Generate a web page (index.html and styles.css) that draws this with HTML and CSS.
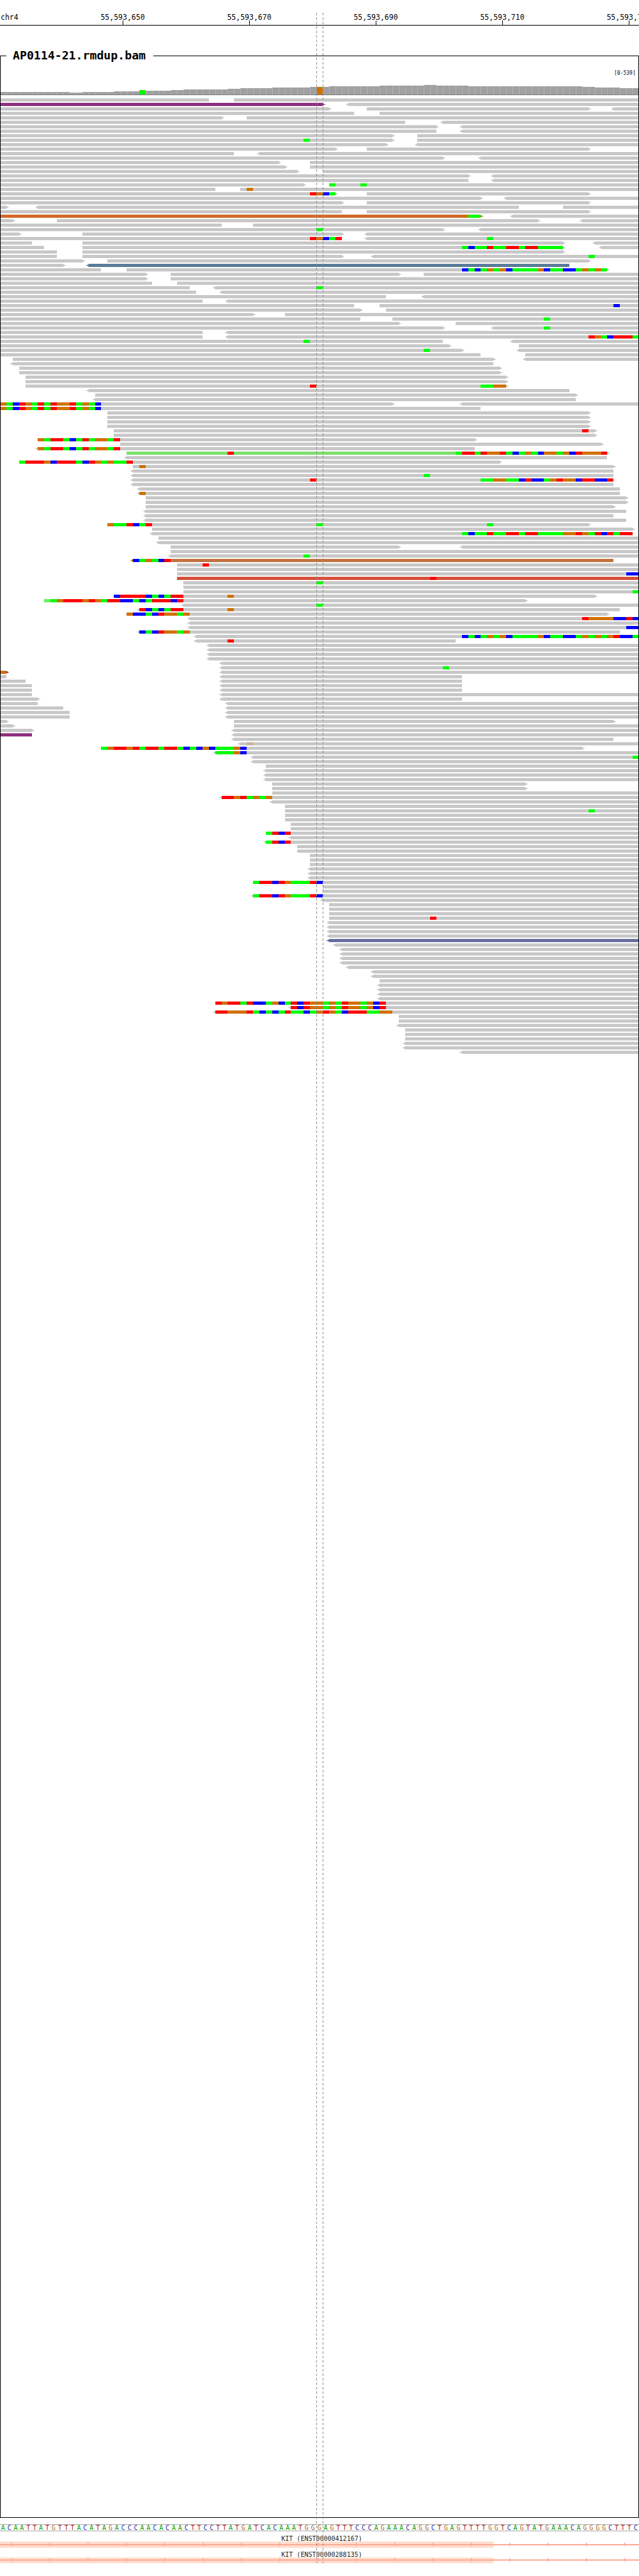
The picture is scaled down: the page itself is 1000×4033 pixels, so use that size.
FILE: index.html
```html
<!DOCTYPE html>
<html>
    <head>
        <meta charset="utf-8">
        <title>AP0114-21.rmdup.bam</title>
        <link rel="stylesheet" href="styles.css">
    </head>
    <body>
        <div class="page">
            <svg id="ruler" class="ruler" width="1000" height="40"></svg>

            <div class="track">
                <div class="track-title">AP0114-21.rmdup.bam</div>
                <svg id="coverage" class="coverage" width="998" height="62"></svg>
                <svg id="reads" class="reads" width="998" height="3790"></svg>
            </div>

            <svg id="sequence" class="sequence" width="1000" height="9"></svg>

            <div class="gene">
                <div class="gene-label">KIT (ENST00000412167)</div>
                <svg id="gene-one" class="gene-bar" width="1000" height="10"></svg>
            </div>
            <div class="gene">
                <div class="gene-label">KIT (ENST00000288135)</div>
                <svg id="gene-two" class="gene-bar" width="1000" height="9"></svg>
            </div>

            <div class="center-line left"></div>
            <div class="center-line right"></div>
        </div>
        <script src="script.js"></script>
    </body>
</html>
```

FILE: styles.css
```css
html, body {
    margin: 0;
    padding: 0;
    background-color: white;
}
svg {
    display: block;
}
.page {
    position: relative;
    width: 1000px;
    height: 4033px;
    overflow: hidden;
}
.ruler text {
    font-family: "DejaVu Sans Mono", monospace;
    font-size: 11.5px;
    fill: black;
}
.ruler line {
    stroke: black;
    stroke-width: 1;
}
.track {
    position: relative;
    box-sizing: border-box;
    width: 1000px;
    height: 3855px;
    margin-top: 47px;
    border: 1px solid black;
}
.track-title {
    position: absolute;
    top: -12px;
    left: 9px;
    padding: 0 12px 0 10px;
    background-color: white;
    font-family: "DejaVu Sans Mono", monospace;
    font-size: 18.2px;
    font-weight: bold;
    line-height: 22px;
    color: black;
}
.coverage text {
    font-family: "DejaVu Sans Mono", monospace;
    font-size: 8px;
    fill: black;
}
.sequence {
    box-sizing: content-box;
    margin-top: 10px;
    border-top: 1px solid #aaaaaa;
    border-bottom: 1px solid #aaaaaa;
}
.sequence text {
    font-family: "DejaVu Sans Mono", monospace;
    font-size: 10px;
    text-anchor: middle;
}
.base-A { fill: #00a000; }
.base-C { fill: #2030a0; }
.base-G { fill: #b06a20; }
.base-T { fill: #b02020; }
.gene {
    margin-top: 6px;
    height: 20px;
}
.gene + .gene {
    margin-top: 5px;
}
.gene-label {
    height: 10px;
    padding-left: 7px;
    font-family: "DejaVu Sans Mono", monospace;
    font-size: 10px;
    line-height: 11px;
    text-align: center;
    color: #222222;
}
.center-line {
    position: absolute;
    top: 20px;
    width: 1px;
    height: 3993px;
    background: repeating-linear-gradient(to bottom, #909090 0, #909090 4px, transparent 4px, transparent 7px);
}
.center-line.left {
    left: 495px;
}
.center-line.right {
    left: 505px;
}
```

FILE: script.js
```js
const NS = 'http://www.w3.org/2000/svg';
const BASE = 9.9;   // pixels per base
const ROW = 7;      // read row pitch
const READ_H = 5;

const colors = {
    r: '#ff0000', g: '#00ff00', b: '#0000ff', o: '#d17105', l: '#66ee66', t: '#c8b49a',
    x: '#c8c8c8', p: '#8f2f7f', c: '#d2692a', s: '#5a7d99', v: '#7ddf6e', k: '#c1733f',
    e: '#d6503a', i: '#666e9f'
};

// one line per row: [<]start-end[>][:color] and @start + mismatch letters
const rows = [
    '0-33 37-101',
    '0-51>:p <55-101',
    '0-52> 58-93> <97-101',
    '0-56 60-101',
    '0-35> 39-101',
    '0-64 <70-101',
    '0-69> <73-101',
    '0-69 <73-101',
    '0-62> 66-101',
    '0-62> 66-101 @48g',
    '0-61> <66-101',
    '0-53> 58-93>',
    '0-37 <41-101',
    '0-70> <76-101',
    '0-44> 49-101',
    '0-45> 49-101',
    '0-47> 51-101',
    '0-74> <78-101',
    '0-74 <78-101',
    '0-48> 52-101 @52g @57g',
    '0-34 38-101 @39o',
    '0-53> 58-93> @49robg',
    '0-76> <80-101',
    '0-54> 58-93>',
    '0-1> <6-82 89-101',
    '0-54 58-93>',
    '0-76>:c <81-101 @73ogg',
    '0-2> 9-85> <92-101',
    '0-35 40-101',
    '0-70> <76-101 @50g',
    '0-3> 13-54> <58-101',
    '0-54 <58-101 @49robgr @77g',
    '0-5 13-89> <94-101',
    '0-7 13-89> <95-101 @73gbggrggrrgrrgggg',
    '0-9 13-89>',
    '0-9 13-54> <59-101 @93g',
    '0-13> 17-93>',
    '0-10> <14-90:s',
    '0-16 20-96> @73bgbgogobggggobggbbgogog',
    '0-23> 27-63> 67-101',
    '0-23> 27-101',
    '0-24 28-101',
    '0-30 <34-101 @50g',
    '0-31 <35-101',
    '0-61 <67-101',
    '0-32 <36-101',
    '0-56 60-101 @97b',
    '0-57> 61-101',
    '0-40> 45-101',
    '0-57 62-101 @86g',
    '0-63> 72-101',
    '0-70> <78-101 @86g',
    '0-32 <36-101',
    '0-32 <36-101 @93rogbrrrg',
    '0-70 <81-101 @48g',
    '0-71> 82-101',
    '0-73> <82-101 @67g',
    '0-76 83-101',
    '2-78> <83-101',
    '<2-78',
    '3-79>',
    '3-79>',
    '4-80>',
    '4-80>',
    '4-80> @49r @76ggoo',
    '<14-90',
    '15-91>',
    '<15-91',
    '0-62> <73-101 @0ogbrogrgroorgogb',
    '0-76 @0ogbrogrgroorgogb',
    '17-93>',
    '17-93>',
    '17-93>',
    '17-93>',
    '18-94> @92r',
    '18-94>',
    '6-75> @6ogrrgbgrgoogr',
    '19-95>',
    '<6-75 @6ogrrgbgrgoogr',
    '20-96>:v @36r @72grrgroorgbgogboogobrooor',
    '<20-96',
    '3-79> @3grrrobrrrgbrogoggr',
    '21-97> @22o',
    '<21-97',
    '<21-97 @67g',
    '<21-97 @49r @76ggooggbrbbgoroobrrbbr',
    '<21-97',
    '<22-98',
    '<22-98 @22o',
    '23-99>',
    '23-99>',
    '23-97>',
    '<23-99',
    '<23-97',
    '<23-99',
    '17-93> @17oggrbgr @50g @77g',
    '24-100>',
    '<24-100 @73gbggrggrrgrrggggoorogrbrgrr',
    '25-101',
    '<25-101',
    '27-63> <73-101',
    '27-101',
    '<27-101 @48g',
    '<21-97:k @21bgogbr',
    '28-101 @32r',
    '28-101',
    '28-101 @99bb',
    '28-101:e @68r',
    '29-101 @50g',
    '29-101',
    '29-101 @100g',
    '18-94> @18brrrrbgbgrr @36o',
    '7-83> @7lgorrrorogrrbbgbgrrrbr',
    '<29-101 @50g',
    '<22-98 @22rbgbgrr @36o',
    '20-96> @20obbgbroogo',
    '<30-101 @92roooobbrb',
    '<30-101',
    '<30-101 @99bb',
    '<22-98 @22bgbroogo',
    '<31-101 @73bgbgogobggggobggbbgogogorbbg',
    '<31-72 @36r',
    '<33-101',
    '<33-101',
    '<33-101',
    '<33-101',
    '<35-101',
    '<35-101 @70g',
    '0-1>:p <35-101 @0o',
    '0-1 <35-73',
    '0-4 <35-73',
    '0-5 <35-73',
    '0-5 <35-73',
    '0-5 <35-101',
    '0-6> <35-73',
    '0-6 <36-101',
    '0-10 <36-101',
    '0-11 <36-101',
    '0-11 <36-101',
    '0-1> 37-97>',
    '0-2> 37-101',
    '0-5> <37-101',
    '0-5:p <37-101',
    '<37-97',
    '<38-101 @39t',
    '16-92> @16gorrorgrrgrrgbgbobgggob',
    '<34-101 @34gggob',
    '<40-101 @100g',
    '<40-101',
    '42-101',
    '<42-101',
    '<42-101',
    '<42-101',
    '43-83>',
    '43-83>',
    '43-101',
    '<35-101 @35rrorgogo',
    '<43-101',
    '45-101',
    '45-101 @93g',
    '45-101',
    '45-101',
    '46-101',
    '46-101',
    '42-101 @42grbr',
    '<46-101',
    '<42-101 @42grbr',
    '47-101',
    '47-101',
    '49-101',
    '49-101',
    '49-101',
    '<49-101',
    '<49-101',
    '<49-101',
    '40-101 @40grrbrogggrb',
    '51-101',
    '51-101',
    '<40-101 @40grrbrogggrb',
    '<51-101',
    '52-101',
    '52-101',
    '52-101',
    '52-101 @68r',
    '<52-101',
    '<52-101',
    '<52-101',
    '<52-101',
    '<52-101:i',
    '<53-101',
    '<54-101',
    '<54-101',
    '<54-101',
    '<54-101',
    '<55-101',
    '<59-101',
    '<59-101',
    '60-101',
    '<60-101',
    '<60-101',
    '<60-101',
    '<60-101',
    '34-101 @34rorrgrbbgobgrbroogogroogobr',
    '<46-101 @46rbroogogroogobr',
    '<34-101 @34rrooorgbgbgrggbgorogbrrrggoo',
    '63-101',
    '63-101',
    '<63-101',
    '64-101',
    '64-101',
    '64-101',
    '<64-101',
    '<64-101',
    '<73-101'
];

// coverage top edge, [first base, y]
const coverageSteps = [
    [0, 144], [11, 145], [13, 144], [18, 143], [23, 142], [27, 141], [29, 140], [36, 139], [38, 138],
    [43, 137], [49, 136], [52, 135], [60, 134], [67, 133], [69, 134], [74, 135], [92, 136], [94, 137], [98, 138]
];

const sequence = 'ACAATTATGTTTACATAGACCCAACACAACTTCCTTATGATCACAAATGGGAGTTTCCCAGAAACAGGCTGAGTTTTGGTCAGTATGAAACAGGGGCTTTC';

function add(svg, name, attrs, text) {
    const el = document.createElementNS(NS, name);
    for (const key in attrs) el.setAttribute(key, attrs[key]);
    if (text) el.textContent = text;
    svg.appendChild(el);
    return el;
}

function baseX(n) {
    return Math.round(n * BASE);
}

function box(svg, x, y, w, h, fill) {
    add(svg, 'rect', { x: x, y: y, width: w, height: h, fill: fill, 'shape-rendering': 'crispEdges' });
}

function drawRuler() {
    const svg = document.getElementById('ruler');
    add(svg, 'text', { x: 1, y: 31 }, 'chr4');
    ['650', '670', '690', '710', '730'].forEach((pos, i) => {
        const x = 192 + i * 198;
        add(svg, 'text', { x: x, y: 31, 'text-anchor': 'middle' }, '55,593,' + pos);
        add(svg, 'line', { x1: x + 0.5, y1: 32, x2: x + 0.5, y2: 39 });
    });
    add(svg, 'line', { x1: 0, y1: 39.5, x2: 1000, y2: 39.5 });
}

function drawCoverage() {
    const svg = document.getElementById('coverage');
    // svg sits at page x=1, y=88
    let step = 0;
    for (let n = 0; n < 101; n++) {
        if (step + 1 < coverageSteps.length && coverageSteps[step + 1][0] <= n) step++;
        const top = coverageSteps[step][1] - 88;
        const x = baseX(n) - 1;
        const w = baseX(n + 1) - baseX(n);
        box(svg, x, top, w, 60 - top, '#b4b4b4');
        box(svg, x + 1, top, w - 1, 60 - top, '#a0a0a0');
    }
    box(svg, baseX(22) - 1, 142 - 88 - 1, 10, 60 - 53, '#00ff00');
    box(svg, baseX(22) + 3, 53, 1, 1, '#ff0000');
    box(svg, 495, 136 - 88, 9, 12, '#d17105');
    box(svg, 500, 48, 1, 1, '#00ff00');
    box(svg, 0, 60, 998, 1, '#808080');
    add(svg, 'text', { x: 960, y: 29 }, '[0-539]');
}

function drawRead(svg, tok, y) {
    const m = tok.match(/^(<?)(\d+)-(\d+)(>?)(?::(\w))?$/);
    const x0 = baseX(+m[2]) - 1;
    const x1 = baseX(+m[3]) - 1;
    const fill = colors[m[5] || 'x'];
    box(svg, x0, y, x1 - x0, READ_H, fill);
    if (m[1]) {
        box(svg, x0 - 2, y + 1, 2, 3, fill);
        box(svg, x0 - 4, y + 2, 2, 1, fill);
    }
    if (m[4]) {
        box(svg, x1, y + 1, 2, 3, fill);
        box(svg, x1 + 2, y + 2, 2, 1, fill);
    }
}

function drawMismatch(svg, tok, y) {
    const start = parseInt(tok.slice(1), 10);
    const letters = tok.replace(/^@\d+/, '');
    for (let i = 0; i < letters.length; i++) {
        const x = baseX(start + i) - 1;
        box(svg, x, y, baseX(start + i + 1) - baseX(start + i), READ_H, colors[letters[i]]);
    }
}

function drawReads() {
    const svg = document.getElementById('reads');
    // svg sits at page y=150
    rows.forEach((row, i) => {
        const y = 4 + i * ROW;
        const toks = row.split(' ');
        toks.filter(t => t[0] !== '@').forEach(t => drawRead(svg, t, y));
        toks.filter(t => t[0] === '@').forEach(t => drawMismatch(svg, t, y));
    });
}

function drawSequence() {
    const svg = document.getElementById('sequence');
    for (let i = 0; i < sequence.length; i++) {
        const c = sequence[i];
        add(svg, 'text', { x: (i + 0.47) * BASE, y: 8, class: 'base-' + c }, c);
    }
}

function drawGene(id, h) {
    const svg = document.getElementById(id);
    const mid = Math.floor(h / 2);
    box(svg, 0, 0, 772, h, '#ffddcc');
    box(svg, 0, mid - 1, 1000, 2, '#ffa898');
    for (let x = 17; x < 1000; x += 60) {
        add(svg, 'polygon', { points: `${x},${mid - 4} ${x + 3},${mid} ${x},${mid + 3}`, fill: '#ffa898' });
    }
}

drawRuler();
drawCoverage();
drawReads();
drawSequence();
drawGene('gene-one', 10);
drawGene('gene-two', 9);
```
